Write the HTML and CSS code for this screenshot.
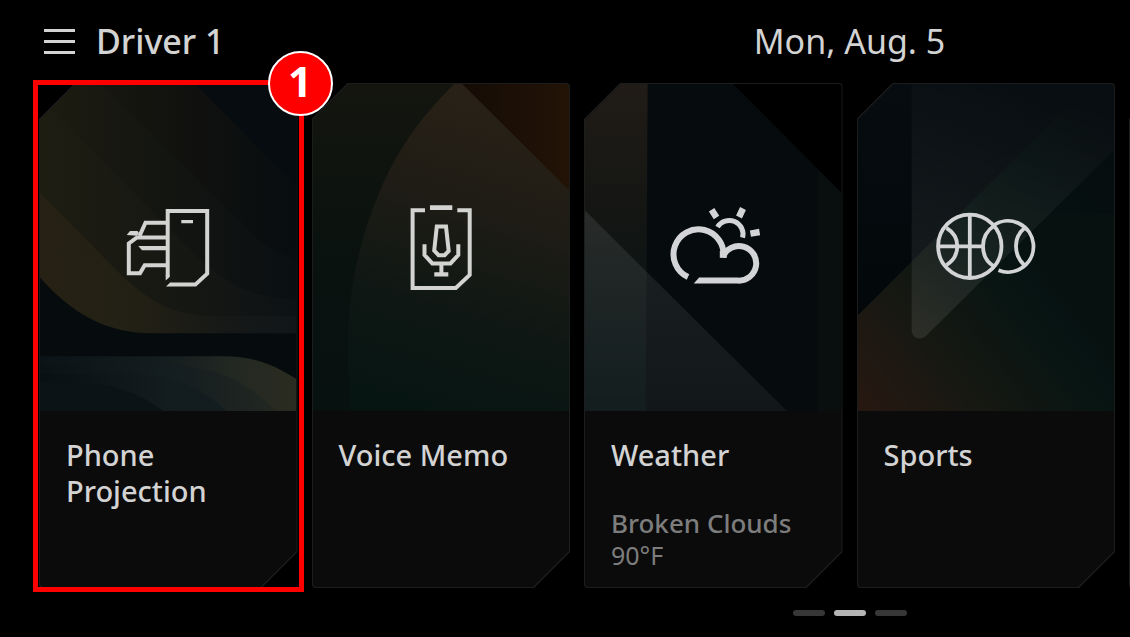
FILE: index.html
```html
<!DOCTYPE html>
<html lang="en">
<head>
    <meta charset="UTF-8">
    <meta name="viewport" content="width=device-width, initial-scale=1.0">
    <title>Home Menu</title>
    <link rel="stylesheet" href="styles.css">
</head>
<body>
    <header class="top-bar">
        <div class="profile">
            <button class="menu-btn" type="button" aria-label="Menu">
                <span></span>
                <span></span>
                <span></span>
            </button>
            <h1>Driver 1</h1>
        </div>
        <time class="date" datetime="08-05">Mon, Aug. 5</time>
    </header>

    <main>
        <ul class="cards">
            <li class="card-slot">
                <a class="card" href="#phone">
                    <span class="card-inner">
                        <span class="art">
                            <svg class="backdrop" viewBox="0 0 258 328" preserveAspectRatio="none" aria-hidden="true">
                                <defs>
                                    <linearGradient id="p1"><stop offset="0" stop-color="#262114"/><stop offset="0.4" stop-color="#222015"/><stop offset="0.7" stop-color="#171917"/><stop offset="1" stop-color="#111619"/></linearGradient>
                                    <linearGradient id="p2"><stop offset="0" stop-color="#1e1d12"/><stop offset="0.6" stop-color="#151713"/><stop offset="1" stop-color="#0d1215"/></linearGradient>
                                    <linearGradient id="p3"><stop offset="0" stop-color="#1d1c11"/><stop offset="0.5" stop-color="#131511"/><stop offset="1" stop-color="#0a0f12"/></linearGradient>
                                    <linearGradient id="p4"><stop offset="0" stop-color="#17170f"/><stop offset="0.5" stop-color="#10110f"/><stop offset="1" stop-color="#080d10"/></linearGradient>
                                    <linearGradient id="p5"><stop offset="0" stop-color="#0b1317"/><stop offset="0.5" stop-color="#151d1e"/><stop offset="0.75" stop-color="#232823"/><stop offset="1" stop-color="#2b2c20"/></linearGradient>
                                    <linearGradient id="p6"><stop offset="0" stop-color="#0a1216"/><stop offset="0.6" stop-color="#151e20"/><stop offset="1" stop-color="#222721"/></linearGradient>
                                    <linearGradient id="p7"><stop offset="0" stop-color="#091014"/><stop offset="0.7" stop-color="#131c1f"/></linearGradient>
                                </defs>
                                <path fill="#060b0e" d="M0 0H258V328H0z"/>
                                <path fill="url(#p1)" d="M0 0V194C32 230 66 250 114 250H258V0z"/>
                                <path fill="url(#p2)" d="M0 0V109L72 182C104 214 130 233 176 233H258V0z"/>
                                <path fill="url(#p3)" d="M0 0V15L152 167C184 199 210 215 258 216V0z"/>
                                <path fill="url(#p4)" d="M62 0L220 157Q238 170 258 175V0z"/>
                                <path fill="#070c10" d="M156 0L258 102V0z"/>
                                <path fill="url(#p5)" d="M0 273H184C216 273 236 282 258 296V328H0z"/>
                                <path fill="url(#p6)" d="M0 282H124C176 282 204 296 238 328H0z"/>
                                <path fill="url(#p7)" d="M0 291H96C134 293 158 302 188 328H0z"/>
                                <path fill="#0b1317" d="M0 300H50C86 304 104 314 124 328H0z"/>
                            </svg>
                            <svg class="icon" viewBox="0 0 104 104" aria-hidden="true">
                                <g fill="none" stroke="#d3d4d2" stroke-width="4">
                                    <path d="M51.7 81V16H91.2V78.7L79.3 89.6H54"/>
                                    <path d="M50 27.7H29.5L23.5 41"/>
                                    <path d="M50 42.4H21L12.8 48.5V78.2H24L28.7 70.2H50"/>
                                </g>
                                <path fill="#d3d4d2" d="M49.7 80h4v2l-4 3.5zM54.2 87.6v4H50zM65.3 25H77v3.2H65.3zM22.3 51H50v4.3H26zM10.7 40L14 36h7.5l1.5 2-2 2.7z"/>
                            </svg>
                        </span>
                        <span class="info">
                            <span class="title">Phone Projection</span>
                        </span>
                    </span>
                </a>
                <div class="callout"><span class="callout-num">1</span></div>
            </li>

            <li class="card-slot">
                <a class="card" href="#memo">
                    <span class="card-inner">
                        <span class="art">
                            <svg class="backdrop" viewBox="0 0 258 328" preserveAspectRatio="none" aria-hidden="true">
                                <defs>
                                    <linearGradient id="v1" x2="0" y2="1"><stop offset="0" stop-color="#14150f"/><stop offset="0.55" stop-color="#09120f"/><stop offset="1" stop-color="#071110"/></linearGradient>
                                    <linearGradient id="v2" gradientUnits="userSpaceOnUse" x1="200" y1="20" x2="110" y2="328"><stop offset="0" stop-color="#292117"/><stop offset="0.35" stop-color="#1e1c15"/><stop offset="0.7" stop-color="#0e1714"/><stop offset="1" stop-color="#071512"/></linearGradient>
                                    <linearGradient id="v3"><stop offset="0" stop-color="#150c05"/><stop offset="1" stop-color="#231307"/></linearGradient>
                                </defs>
                                <path fill="url(#v1)" d="M0 0H258V328H0z"/>
                                <path fill="url(#v2)" d="M142 0C104 38 84 68 66 110C48 154 36 200 35 259Q35 294 38 328H258V0z"/>
                                <path fill="url(#v3)" d="M150 0L258 107V0z"/>
                            </svg>
                            <svg class="icon" viewBox="0 0 104 104" aria-hidden="true">
                                <g fill="none" stroke="#d3d4d2" stroke-width="4">
                                    <path d="M36 15.2H23.6V93H66.8L80.7 80V15.2H68.3"/>
                                    <path d="M47.8 31.5H57L59.7 56 55.6 60.2H49.6L45.2 55.6z"/>
                                    <path d="M35.5 49.3V60L43.3 68.4H61.5L69.3 60V49.3M52.4 68V80"/>
                                </g>
                                <path fill="#d3d4d2" d="M41 10.3H63.3V15H41zM45.3 77.2H59.3V81.5H45.3z"/>
                            </svg>
                        </span>
                        <span class="info">
                            <span class="title">Voice Memo</span>
                        </span>
                    </span>
                </a>
            </li>

            <li class="card-slot">
                <a class="card" href="#weather">
                    <span class="card-inner">
                        <span class="art">
                            <svg class="backdrop" viewBox="0 0 258 328" preserveAspectRatio="none" aria-hidden="true">
                                <defs>
                                    <linearGradient id="w1" x2="0" y2="1"><stop offset="0" stop-color="#211c17"/><stop offset="0.4" stop-color="#141614"/><stop offset="0.6" stop-color="#0d1414"/><stop offset="1" stop-color="#071213"/></linearGradient>
                                    <linearGradient id="w2" gradientUnits="userSpaceOnUse" x1="0" y1="127" x2="0" y2="328"><stop offset="0" stop-color="#fff" stop-opacity="0.09"/><stop offset="1" stop-color="#fff" stop-opacity="0.05"/></linearGradient>
                                </defs>
                                <path fill="#060b0e" d="M0 0H258V328H0z"/>
                                <path fill="#090e0f" d="M234 0H258V328H234z"/>
                                <path fill="url(#w1)" d="M0 0H63L61 328H0z"/>
                                <path fill="url(#w2)" d="M0 127L203 328H0z"/>
                                <path fill="#000" d="M149 0L258 109V0z"/>
                            </svg>
                            <svg class="icon" viewBox="0 0 104 104" aria-hidden="true">
                                <g fill="none" stroke="#d3d4d5" stroke-width="6">
                                    <path d="M27 82A25 25 0 1 1 62.3 62.7"/>
                                    <path d="M61.8 62A17.3 17.3 0 1 1 77 85.6H38"/>
                                    <path stroke-width="5" d="M56.5 32A13.8 13.8 0 0 1 81.6 42.7"/>
                                    <path stroke-width="6.5" d="M50.6 14.8L55.5 22.4M82 13.5L78 22M89.4 38.6L98.6 37"/>
                                </g>
                                <path fill="#d3d4d5" d="M38.2 82.6v6H32.7zM58.8 56h6l1 6.7h-7z"/>
                            </svg>
                        </span>
                        <span class="info">
                            <span class="title">Weather</span>
                            <span class="details">
                                <span class="condition">Broken Clouds</span>
                                <span class="temp">90°F</span>
                            </span>
                        </span>
                    </span>
                </a>
            </li>

            <li class="card-slot">
                <a class="card" href="#sports">
                    <span class="card-inner">
                        <span class="art">
                            <svg class="backdrop" viewBox="0 0 258 328" preserveAspectRatio="none" aria-hidden="true">
                                <defs>
                                    <linearGradient id="s1" gradientUnits="userSpaceOnUse" x1="0" y1="328" x2="190" y2="180"><stop offset="0" stop-color="#271811"/><stop offset="0.4" stop-color="#171812"/><stop offset="0.8" stop-color="#081513"/><stop offset="1" stop-color="#061110"/></linearGradient>
                                    <linearGradient id="s2" gradientUnits="userSpaceOnUse" x1="70" y1="250" x2="150" y2="0"><stop offset="0" stop-color="#fff" stop-opacity="0.09"/><stop offset="0.5" stop-color="#fff" stop-opacity="0.05"/><stop offset="1" stop-color="#fff" stop-opacity="0.01"/></linearGradient>
                                    <linearGradient id="s3" x2="0" y2="1"><stop offset="0" stop-color="#060c0f"/><stop offset="1" stop-color="#020609"/></linearGradient>
                                    <linearGradient id="s4" gradientUnits="userSpaceOnUse" x1="150" y1="110" x2="240" y2="20"><stop offset="0" stop-color="#060c0f" stop-opacity="0"/><stop offset="1" stop-color="#060c0f"/></linearGradient>
                                </defs>
                                <path fill="url(#s3)" d="M0 0H258V328H0z"/>
                                <path fill="url(#s1)" d="M0 232L233 0H258V328H0z"/>
                                <path fill="url(#s4)" d="M103 130L233 0H258V130z"/>
                                <path fill="url(#s2)" d="M54 0V247C54 255 63 258 69 252L258 66V0z"/>
                            </svg>
                            <svg class="icon" viewBox="0 0 104 104" aria-hidden="true">
                                <g fill="none" stroke="#d3d4d5" stroke-width="3.8">
                                    <circle cx="35.8" cy="51.3" r="31.7"/>
                                    <path d="M35.8 20V83M4 51.3H50"/>
                                    <path d="M12.5 33Q23.3 39.5 23.3 51.3T12.5 70"/>
                                    <path d="M60.5 30.5Q49 38 49 51.3T59.5 71"/>
                                    <path d="M59.5 30.3A25.6 25.6 0 1 1 64.5 75.3"/>
                                    <path d="M90.5 33Q82 40 82 51.3T90.5 70.5"/>
                                </g>
                            </svg>
                        </span>
                        <span class="info">
                            <span class="title">Sports</span>
                        </span>
                    </span>
                </a>
            </li>

            <!-- next page peeks in at the right edge -->
            <li class="card-slot" aria-hidden="true"><div class="card"></div></li>
        </ul>
    </main>

    <nav class="pager" aria-label="Pages">
        <div class="dots">
            <button type="button" aria-label="Page 1"></button>
            <button type="button" class="active" aria-label="Page 2"></button>
            <button type="button" aria-label="Page 3"></button>
        </div>
    </nav>
</body>
</html>
```
FILE: styles.css
```css
* {
    box-sizing: border-box;
}

body {
    margin: 0;
    background-color: #000;
    color: #d3d3d3;
    font-family: "Noto Sans", "Open Sans", sans-serif;
}

/* header and pager share the two halves of the card row */
.top-bar,
.pager {
    display: grid;
    grid-template-columns: 1fr 1fr;
    column-gap: 14px;
    padding: 0 15px 0 39px;
}

.top-bar {
    height: 83px;
    align-items: center;
}

.profile {
    display: flex;
    align-items: center;
    gap: 21px;
    padding-left: 5px;
}

.menu-btn {
    display: flex;
    flex-direction: column;
    gap: 8px;
    width: 31px;
    padding: 0;
    background: none;
    border: none;
    cursor: pointer;
}

.menu-btn span {
    height: 3px;
    background-color: #d3d3d3;
}

h1,
.date {
    margin: 0;
    padding-bottom: 2px;
    font-size: 34px;
    line-height: 48px;
}

h1 {
    font-weight: 500;
}

.date {
    font-weight: 400;
    text-align: center;
}

.cards {
    display: grid;
    grid-auto-flow: column;
    grid-auto-columns: calc((100% - 42px) / 4);
    gap: 14px;
    margin: 0;
    padding: 0 15px 0 39px;
    list-style: none;
    overflow-x: clip;
}

.card-slot {
    position: relative;
    display: grid;
}

/* outer shape is the outline, inner shape sits 1px inside */
.card,
.card-inner {
    --cut: 36px;
    display: block;
    border-radius: 4px;
    clip-path: polygon(var(--cut) 0, 100% 0, 100% calc(100% - var(--cut)), calc(100% - var(--cut)) 100%, 0 100%, 0 var(--cut));
}

.card {
    padding: 1px;
    background-color: #1c1d1d;
    color: inherit;
    text-decoration: none;
}

.card-inner {
    background-color: #0b0b0b;
    overflow: hidden;
}

.art {
    display: grid;
    place-items: center;
    height: 327px;
}

.backdrop,
.icon {
    grid-area: 1 / 1;
}

.backdrop {
    width: 100%;
    height: 100%;
}

.icon {
    width: 104px;
    height: 104px;
    margin-bottom: 2px;
}

.info {
    display: flex;
    flex-direction: column;
    justify-content: space-between;
    height: 176px;
    padding: 26px 26px 16px;
}

.title {
    font-size: 29px;
    font-weight: 500;
    line-height: 36px;
}

.details {
    display: flex;
    flex-direction: column;
    color: #7d7d7d;
    line-height: 32px;
    white-space: nowrap;
}

.condition {
    font-size: 26px;
    font-weight: 500;
}

.temp {
    font-size: 25px;
}

.callout {
    position: absolute;
    inset: -3px -6px -4px;
    border: 5px solid #f00;
    pointer-events: none;
}

.callout-num {
    position: absolute;
    top: -34px;
    right: -34px;
    width: 65px;
    height: 65px;
    border: 2px solid #fff;
    border-radius: 50%;
    background-color: #f00;
    color: #fff;
    font-size: 42px;
    font-weight: 700;
    line-height: 56px;
    text-align: center;
}

.pager {
    padding-top: 22px;
}

.dots {
    grid-column: 2;
    display: flex;
    justify-content: center;
    gap: 9px;
}

.dots button {
    width: 32px;
    height: 6px;
    padding: 0;
    border: none;
    border-radius: 3px;
    background-color: #373737;
    cursor: pointer;
}

.dots .active {
    background-color: #b4b4b4;
}
```
